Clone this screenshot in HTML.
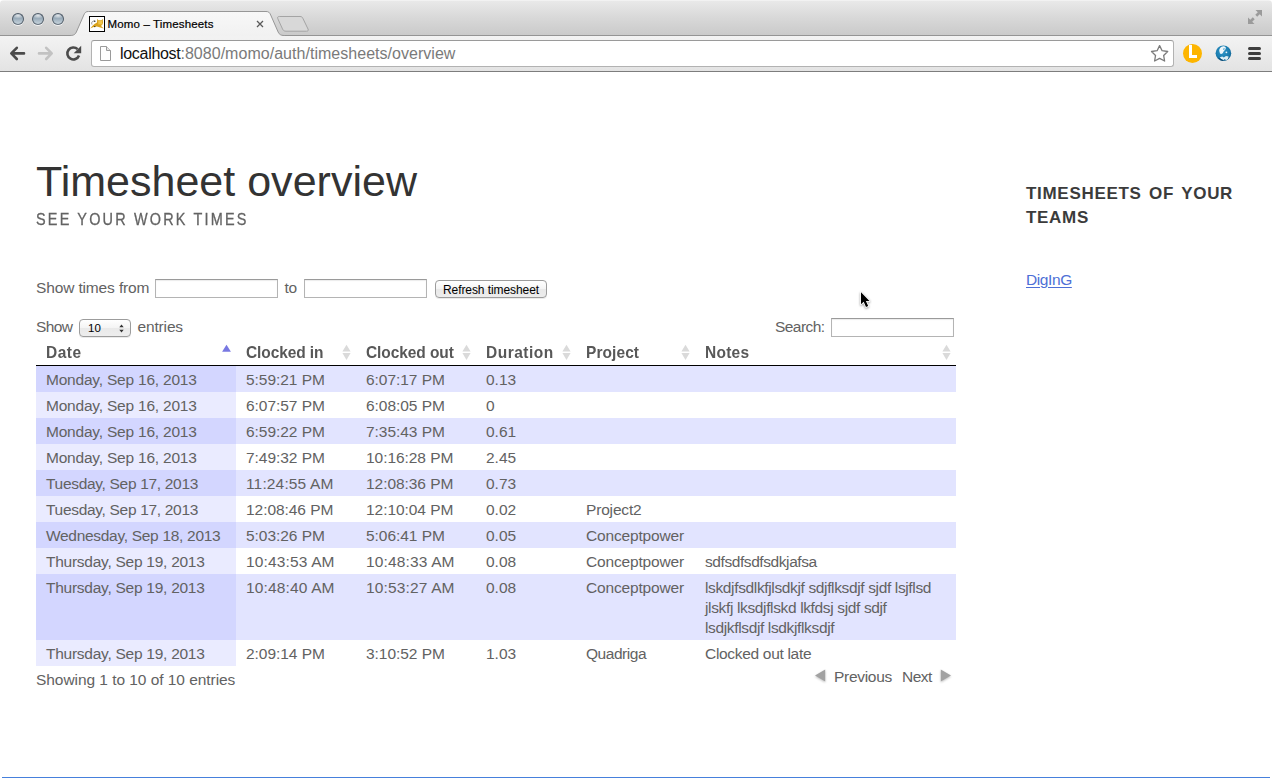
<!DOCTYPE html>
<html>
<head>
<meta charset="utf-8">
<title>Momo – Timesheets</title>
<style>
html,body{margin:0;padding:0;}
body{width:1272px;height:778px;overflow:hidden;background:#fff;position:relative;font-family:"Liberation Sans",sans-serif;color:#555;font-size:16px;}
.abs{position:absolute;}
/* ---------- browser chrome ---------- */
#titlebar{left:0;top:0;width:1272px;height:35px;background:linear-gradient(#f2f2f2 0,#f2f2f2 1px,#e9e9e9 1px,#e2e2e2 8px,#d9d9d9 17px,#cacaca 35px);border-radius:4px 4px 0 0;}
#titleline{left:0;top:35px;width:1272px;height:1px;background:#949494;}
#toolbar{left:0;top:36px;width:1272px;height:35px;background:linear-gradient(#f3f3f3,#e3e3e3);}
#toolline{left:0;top:71px;width:1272px;height:1px;background:#7d7d7d;}
.tl{width:10px;height:10px;border-radius:50%;border:1px solid #515d69;border-bottom-color:#66727e;background:radial-gradient(ellipse 60% 30% at 50% 16%,rgba(255,255,255,.75) 0,rgba(255,255,255,0) 100%),linear-gradient(#8496a6 0,#9aacba 45%,#c6d3dc 100%);top:13px;box-shadow:0 1px 0.5px rgba(255,255,255,.75);}
#urlbox{left:91px;top:40px;width:1083px;height:27px;background:#fff;border:1px solid #b2b2b2;border-top-color:#9a9a9a;border-radius:3px;box-sizing:border-box;}
#url{left:120px;top:44.500px;font-size:16px;line-height:18px;color:#7a7a7a;white-space:nowrap;letter-spacing:0.03px;}
#url b{font-weight:normal;color:#111;letter-spacing:-0.3px;}
#tabtitle{left:107.500px;top:17px;font-size:11.500px;line-height:15px;color:#000;white-space:nowrap;letter-spacing:0.15px;-webkit-text-stroke:0.2px #000;}
/* ---------- page ---------- */
h1{margin:0;left:36px;top:156px;font-weight:normal;font-size:43px;line-height:50px;color:#333;white-space:nowrap;letter-spacing:0.01px;}
#sub{left:36px;top:210px;font-size:17px;line-height:20px;color:#636363;-webkit-text-stroke:0.3px #636363;letter-spacing:2.56px;white-space:nowrap;transform:scaleX(0.85);transform-origin:0 0;}
.t{white-space:nowrap;line-height:20px;font-size:15.500px;color:#626262;}
.inp{box-sizing:border-box;border:1px solid #b4b4b4;border-top-color:#9a9a9a;background:#fff;box-shadow:inset 0 1px 1px rgba(0,0,0,.08);}
#btn{left:435px;top:280px;width:112px;height:18px;box-sizing:border-box;border:1px solid #9c9c9c;border-radius:4px;background:linear-gradient(#ffffff,#f4f4f4 50%,#e9e9e9 51%,#ededed);font-size:12px;letter-spacing:-0.08px;line-height:18px;color:#000;text-align:center;white-space:nowrap;box-shadow:0 1px 0 rgba(0,0,0,.08);}
#sel{left:79px;top:319px;width:52px;height:18px;box-sizing:border-box;border:1px solid #9c9c9c;border-radius:4px;background:linear-gradient(#ffffff,#f4f4f4 50%,#e9e9e9 51%,#ededed);font-size:11.5px;line-height:16px;color:#000;box-shadow:0 1px 0 rgba(0,0,0,.08);}
table{position:absolute;left:36px;top:340px;width:920px;border-collapse:collapse;table-layout:fixed;}
th{font-weight:bold;text-align:left;padding:4px 10px 3px 10px;height:18px;line-height:18px;font-size:15.500px;color:#585858;border-bottom:1px solid #000;white-space:nowrap;position:relative;}
td{padding:4px 10px 2px 10px;line-height:20px;font-size:15.500px;color:#626262;vertical-align:top;white-space:nowrap;letter-spacing:-0.16px;}
td.d1{letter-spacing:-0.21px;}td.d2{letter-spacing:-0.31px;}td.d3{letter-spacing:-0.30px;}td.d4{letter-spacing:-0.26px;}
td:nth-child(2),td:nth-child(3){letter-spacing:-0.04px;}
td.w{letter-spacing:-0.05px;}
td.w.a{letter-spacing:0.15px;}
td:nth-child(4){letter-spacing:0px;}
td:nth-child(5){letter-spacing:-0.17px;}
td:nth-child(6){letter-spacing:-0.36px;}
tr.odd td{background:#e2e4ff;}
tr.odd td.s{background:#d3d6ff;}
tr.even td{background:#fff;}
tr.even td.s{background:#eaebff;}
.hx{display:inline-block;transform:scaleY(1.09);transform-origin:0 77%;}
.sort{position:absolute;right:5px;top:4.5px;width:9px;height:15px;overflow:visible;}
#side h2{margin:0;font-size:17px;line-height:24px;color:#3b3b3b;letter-spacing:0.7px;word-spacing:2px;font-weight:bold;white-space:nowrap;}
</style>
</head>
<body>
<!-- chrome -->
<div class="abs" id="titlebar"></div>
<div class="abs" id="titleline"></div>
<div class="abs" id="toolbar"></div>
<div class="abs" id="toolline"></div>
<div class="abs tl" style="left:12px"></div>
<div class="abs tl" style="left:32px"></div>
<div class="abs tl" style="left:52px"></div>
<svg class="abs" id="tabs" style="left:0;top:0" width="400" height="38" viewBox="0 0 400 38">
  <defs><linearGradient id="tg" x1="0" y1="0" x2="0" y2="1"><stop offset="0" stop-color="#f8f8f8"/><stop offset="1" stop-color="#f1f1f1"/></linearGradient></defs>
  <path d="M279.300 16.500 L300 16.500 C301.800 16.500 302.300 17.100 303.100 18.800 L308 29 C308.700 30.500 308 31.200 306.500 31.200 L286 31.200 C284 31.200 283.300 30.500 282.500 28.900 L277.800 18.700 C277.200 17.300 277.800 16.500 279.300 16.500 Z" fill="#d8d8d8" stroke="#a4a4a4" stroke-width="1"/>
  <path d="M70 35.500 C74.500 35.500 75.500 34 76.800 31 L83.800 15 C85 12.300 86 11.500 88.500 11.500 L266 11.500 C268.500 11.500 269.500 12.300 270.700 15 L277.700 31 C279 34 280 35.500 284.500 35.500 L284.500 37 L70 37 Z" fill="url(#tg)" stroke="#979797" stroke-width="1"/>
  <rect x="69" y="36" width="217" height="2" fill="#f2f2f2"/>
  <!-- favicon -->
  <rect x="89.500" y="16.500" width="15" height="15" fill="#fff" stroke="#000" stroke-width="1"/>
  <path d="M97.200 18.800 L98.300 20.300 L101.600 20.300 L102.800 18.800 L103 23 L102 25.200 L100.800 25.800 L103.800 28.600 L100.300 27.600 L96.800 26.600 L93.500 27 L90.300 28.600 L92.300 26 L94.500 24 L97 22.600 Z" fill="#d9a21c"/><rect x="98.300" y="20.800" width="3.700" height="3.600" fill="#efc64e"/>
  <path d="M92 24.500 C91 22.500 92.500 20.500 95 21.200" fill="none" stroke="#666" stroke-width="0.700"/><circle cx="94.800" cy="21.300" r="0.700" fill="#222"/><circle cx="94.800" cy="26.600" r="0.700" fill="#222"/>
  <!-- close x -->
  <path d="M257 21 L263 27 M263 21 L257 27" stroke="#5a5a5a" stroke-width="1.300" fill="none"/>
</svg>
<div class="abs" id="tabtitle">Momo – Timesheets</div>
<!-- fullscreen -->
<svg class="abs" style="left:1247px;top:9px" width="16" height="16" viewBox="0 0 16 16">
  <path d="M8.500 1 L15 1 L15 7.500 L12.700 5.200 L10.200 7.700 L8.300 5.800 L10.800 3.300 Z" fill="#9b9b9b"/>
  <path d="M7.500 15 L1 15 L1 8.500 L3.300 10.800 L5.800 8.300 L7.700 10.200 L5.200 12.700 Z" fill="#9b9b9b"/>
</svg>
<!-- nav buttons -->
<svg class="abs" style="left:0;top:40px" width="92" height="28" viewBox="0 40 92 28">
  <path d="M16.800 47.800 L11.300 53.400 L16.800 59 M11.800 53.400 L24 53.400" fill="none" stroke="#4b4b4b" stroke-width="2.600" stroke-linecap="round" stroke-linejoin="round"/>
  <path d="M46.200 47.800 L51.700 53.400 L46.200 59 M51.200 53.400 L39 53.400" fill="none" stroke="#c2c2c2" stroke-width="2.600" stroke-linecap="round" stroke-linejoin="round"/>
  <path d="M77.600 49.200 A6 6 0 1 0 79 55.500" fill="none" stroke="#4b4b4b" stroke-width="2.600"/>
  <path d="M81.200 45.800 L81.200 53.300 L73.700 53.300 Z" fill="#4b4b4b"/>
</svg>
<div class="abs" id="urlbox"></div>
<!-- page icon -->
<svg class="abs" style="left:99px;top:45px" width="13" height="17" viewBox="0 0 13 17">
  <path d="M1.500 1.500 L7.500 1.500 L11.500 5.500 L11.500 15.500 L1.500 15.500 Z" fill="#fdfdfd" stroke="#9a9a9a" stroke-width="1"/>
  <path d="M7.500 1.500 L7.500 5.500 L11.500 5.500" fill="#e6e6e6" stroke="#9a9a9a" stroke-width="1"/>
</svg>
<div class="abs" id="url"><b>localhost</b>:8080/momo/auth/timesheets/overview</div>
<!-- star -->
<svg class="abs" style="left:1149px;top:43px" width="21" height="21" viewBox="0 0 21 21">
  <path d="M10.600 2.600 L13.100 7.700 L18.700 8.500 L14.650 12.450 L15.600 18 L10.600 15.400 L5.600 18 L6.550 12.450 L2.500 8.500 L8.100 7.700 Z" fill="#fff" stroke="#7b7b7b" stroke-width="1.300" stroke-linejoin="round"/>
</svg>
<!-- L -->
<div class="abs" style="left:1183px;top:44px;width:19px;height:19px;border-radius:50%;background:#fdb500"></div>
<div class="abs" style="left:1188.500px;top:44.500px;width:3.200px;height:13.600px;background:#fff"></div>
<div class="abs" style="left:1188.500px;top:55px;width:8.200px;height:3.100px;background:#fff"></div>
<!-- globe -->
<svg class="abs" style="left:1214px;top:44px" width="19" height="19" viewBox="0 0 19 19">
  <defs><radialGradient id="gg" cx="0.45" cy="0.4" r="0.65"><stop offset="0" stop-color="#2f96c8"/><stop offset="0.65" stop-color="#1a7db0"/><stop offset="1" stop-color="#115e8c"/></radialGradient></defs>
  <circle cx="9.400" cy="9.300" r="7.800" fill="url(#gg)"/>
  <path d="M5.400 7.500 C4.800 4.800 6.800 2.600 9.300 2.300 C11 2.100 12.300 3.300 11.700 4.800 C11.200 6.200 9.800 6.800 9.200 8.300 C8.700 9.800 7.200 10.600 6 9.600 Z" fill="#fff" opacity="0.92"/>
  <path d="M9 4.500 L10.800 4 L10.500 5.800 L9.200 6 Z" fill="#4aa3cf" opacity="0.8"/>
  <circle cx="12.400" cy="8.300" r="0.900" fill="#fff" opacity="0.9"/>
  <path d="M5.800 13.200 L8.300 12.400 L9.800 13.400 L12 12 L14.600 12.600 L14 14.800 L12.200 16.300 L10.800 15 L9.300 16.200 L7.200 15 Z" fill="#f4f9fb" opacity="0.9"/>
  <path d="M4.200 13.600 C5.400 15.800 7.400 17 9.400 17.100 L8.800 15.800 L6.400 14.800 Z" fill="#0a3d63" opacity="0.85"/>
</svg>
<!-- menu -->
<div class="abs" style="left:1248px;top:47px;width:13px;height:3px;border-radius:1.500px;background:#3e3e3e"></div>
<div class="abs" style="left:1248px;top:52px;width:13px;height:3px;border-radius:1.500px;background:#3e3e3e"></div>
<div class="abs" style="left:1248px;top:57px;width:13px;height:3px;border-radius:1.500px;background:#3e3e3e"></div>

<!-- page -->
<h1 class="abs">Timesheet overview</h1>
<div class="abs" id="sub">SEE YOUR WORK TIMES</div>

<div class="abs t" style="left:36px;top:278px;letter-spacing:-0.14px">Show times from</div>
<div class="abs inp" style="left:155px;top:279px;width:123px;height:19px"></div>
<div class="abs t" style="left:284.500px;top:278px;letter-spacing:-0.3px">to</div>
<div class="abs inp" style="left:304px;top:279px;width:123px;height:19px"></div>
<div class="abs" id="btn">Refresh timesheet</div>

<div class="abs t" style="left:36px;top:317px;letter-spacing:-0.6px">Show</div>
<div class="abs" id="sel"><span style="position:absolute;left:8px;top:-0.300px;font-size:11.500px">10</span><svg style="position:absolute;left:38px;top:4px" width="7" height="10" viewBox="0 0 7 10"><path d="M3.500 0.400 L5.700 3.300 L1.300 3.300 Z M1.300 5.700 L5.700 5.700 L3.500 8.600 Z" fill="#333"/></svg></div>
<div class="abs t" style="left:137.500px;top:317px;letter-spacing:-0.15px">entries</div>
<div class="abs t" style="left:775px;top:317px;letter-spacing:-0.55px">Search:</div>
<div class="abs inp" style="left:831px;top:318px;width:123px;height:19px"></div>

<table>
<colgroup><col style="width:200px"><col style="width:120px"><col style="width:120px"><col style="width:100px"><col style="width:119px"><col style="width:261px"></colgroup>
<thead><tr><th style="letter-spacing:0.5px"><span class="hx">Date</span><svg class="sort" viewBox="0 0 9 15"><path d="M4.500 -0.200 L8.900 6.800 L0.100 6.800 Z" fill="#7878e2"/></svg></th><th style="letter-spacing:-0.1px"><span class="hx">Clocked in</span><svg class="sort" viewBox="0 0 9 15"><path d="M4.500 -0.200 L8.600 6.600 L0.400 6.600 Z M0.400 8 L8.600 8 L4.500 15 Z" fill="#dadada"/></svg></th><th style="letter-spacing:-0.08px"><span class="hx">Clocked out</span><svg class="sort" viewBox="0 0 9 15"><path d="M4.500 -0.200 L8.600 6.600 L0.400 6.600 Z M0.400 8 L8.600 8 L4.500 15 Z" fill="#dadada"/></svg></th><th style="letter-spacing:0.5px"><span class="hx">Duration</span><svg class="sort" viewBox="0 0 9 15"><path d="M4.500 -0.200 L8.600 6.600 L0.400 6.600 Z M0.400 8 L8.600 8 L4.500 15 Z" fill="#dadada"/></svg></th><th style="letter-spacing:0.08px"><span class="hx">Project</span><svg class="sort" viewBox="0 0 9 15"><path d="M4.500 -0.200 L8.600 6.600 L0.400 6.600 Z M0.400 8 L8.600 8 L4.500 15 Z" fill="#dadada"/></svg></th><th style="letter-spacing:0.25px"><span class="hx">Notes</span><svg class="sort" viewBox="0 0 9 15"><path d="M4.500 -0.200 L8.600 6.600 L0.400 6.600 Z M0.400 8 L8.600 8 L4.500 15 Z" fill="#dadada"/></svg></th></tr></thead>
<tbody>
<tr class="odd"><td class="s d1">Monday, Sep 16, 2013</td><td>5:59:21 PM</td><td>6:07:17 PM</td><td>0.13</td><td></td><td></td></tr>
<tr class="even"><td class="s d1">Monday, Sep 16, 2013</td><td>6:07:57 PM</td><td>6:08:05 PM</td><td>0</td><td></td><td></td></tr>
<tr class="odd"><td class="s d1">Monday, Sep 16, 2013</td><td>6:59:22 PM</td><td>7:35:43 PM</td><td>0.61</td><td></td><td></td></tr>
<tr class="even"><td class="s d1">Monday, Sep 16, 2013</td><td>7:49:32 PM</td><td class="w">10:16:28 PM</td><td>2.45</td><td></td><td></td></tr>
<tr class="odd"><td class="s d2">Tuesday, Sep 17, 2013</td><td class="w a">11:24:55 AM</td><td class="w">12:08:36 PM</td><td>0.73</td><td></td><td></td></tr>
<tr class="even"><td class="s d2">Tuesday, Sep 17, 2013</td><td class="w">12:08:46 PM</td><td class="w">12:10:04 PM</td><td>0.02</td><td>Project2</td><td></td></tr>
<tr class="odd"><td class="s d3">Wednesday, Sep 18, 2013</td><td>5:03:26 PM</td><td>5:06:41 PM</td><td>0.05</td><td>Conceptpower</td><td></td></tr>
<tr class="even"><td class="s d4">Thursday, Sep 19, 2013</td><td class="w a">10:43:53 AM</td><td class="w a">10:48:33 AM</td><td>0.08</td><td>Conceptpower</td><td style="letter-spacing:-0.42px">sdfsdfsdfsdkjafsa</td></tr>
<tr class="odd"><td class="s d4">Thursday, Sep 19, 2013</td><td class="w a">10:48:40 AM</td><td class="w a">10:53:27 AM</td><td>0.08</td><td>Conceptpower</td><td>lskdjfsdlkfjlsdkjf sdjflksdjf sjdf lsjflsd<br>jlskfj lksdjflskd lkfdsj sjdf sdjf<br>lsdjkflsdjf lsdkjflksdjf</td></tr>
<tr class="even"><td class="s d4">Thursday, Sep 19, 2013</td><td>2:09:14 PM</td><td>3:10:52 PM</td><td>1.03</td><td style="letter-spacing:-0.45px">Quadriga</td><td style="letter-spacing:-0.31px">Clocked out late</td></tr>
</tbody>
</table>

<div class="abs t" style="left:36px;top:670px;letter-spacing:-0.05px">Showing 1 to 10 of 10 entries</div>
<div class="abs t" style="left:834px;top:667px;letter-spacing:-0.3px">Previous</div>
<div class="abs t" style="left:902px;top:667px;letter-spacing:-0.53px">Next</div>
<svg class="abs" style="left:811px;top:666px" width="20" height="20" viewBox="0 0 20 20"><path d="M14.200 3.600 L4 9.500 L14.200 15.400 Z" fill="#a2a2a2" style="filter:drop-shadow(0.500px 1px 0.800px rgba(0,0,0,.25))"/></svg>
<svg class="abs" style="left:935px;top:666px" width="20" height="20" viewBox="0 0 20 20"><path d="M5.800 3.600 L16 9.500 L5.800 15.400 Z" fill="#a2a2a2" style="filter:drop-shadow(0.500px 1px 0.800px rgba(0,0,0,.25))"/></svg>

<div class="abs" id="side" style="left:1026px;top:182px;width:230px">
<h2>TIMESHEETS OF YOUR<br>TEAMS</h2>
</div>
<div class="abs t" style="left:1026px;top:270px;color:#4d6fd6;text-decoration:underline;text-underline-offset:1.500px;letter-spacing:-0.4px">DigInG</div>

<svg class="abs" style="left:855px;top:287px" width="22" height="28" viewBox="855 287 22 28">
  <path d="M861 292.300 L861 304.200 L863.700 301.700 L866 307 L868.200 306.100 L865.900 300.900 L869.500 300.900 Z" fill="#000" stroke="#fff" stroke-width="1.600" stroke-linejoin="round" paint-order="stroke" style="filter:drop-shadow(0 1px 1.200px rgba(0,0,0,.4))"/>
</svg>
<div class="abs" style="left:2px;top:777px;width:1268px;height:1px;background:#4680dc"></div>
</body>
</html>
